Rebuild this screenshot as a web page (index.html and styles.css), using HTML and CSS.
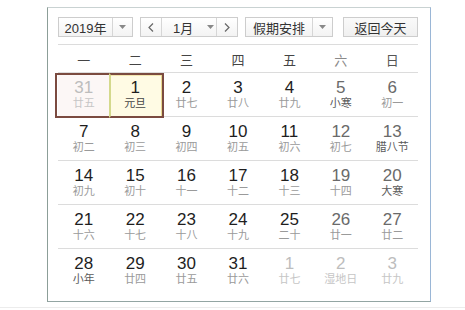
FILE: index.html
```html
<!DOCTYPE html>
<html lang="zh">
<head>
<meta charset="utf-8">
<link rel="stylesheet" href="styles.css">
</head>
<body>
<div class="frame">
  <div class="toolbar">
    <div class="ctl year"><span class="txt">2019年</span><span class="arr"><svg width="7" height="4" viewBox="0 0 7 4"><path d="M0 0h7L3.5 4z" fill="#888"/></svg></span></div>
    <div class="ctl month">
      <span class="nav"><svg width="6" height="9" viewBox="0 0 6 9"><path d="M5 0.5L1 4.5L5 8.5" fill="none" stroke="#666" stroke-width="1.2"/></svg></span>
      <span class="mtxt">1月<svg class="marr" width="7" height="4" viewBox="0 0 7 4"><path d="M0 0h7L3.5 4z" fill="#888"/></svg></span>
      <span class="nav next"><svg width="6" height="9" viewBox="0 0 6 9"><path d="M1 0.5L5 4.5L1 8.5" fill="none" stroke="#666" stroke-width="1.2"/></svg></span>
    </div>
    <div class="ctl holiday"><span class="txt">假期安排</span><span class="arr"><svg width="7" height="4" viewBox="0 0 7 4"><path d="M0 0h7L3.5 4z" fill="#888"/></svg></span></div>
    <div class="ctl today-btn">返回今天</div>
  </div>
  <div class="weekhead">
    <span>一</span><span>二</span><span>三</span><span>四</span><span>五</span><span class="sat">六</span><span class="sun">日</span>
  </div>
  <div class="row">
    <div class="cell other sel"><b>31</b><i>廿五</i></div>
    <div class="cell today"><b>1</b><i class="fest">元旦</i></div>
    <div class="cell"><b>2</b><i>廿七</i></div>
    <div class="cell"><b>3</b><i>廿八</i></div>
    <div class="cell"><b>4</b><i>廿九</i></div>
    <div class="cell we"><b>5</b><i class="fest">小寒</i></div>
    <div class="cell we"><b>6</b><i>初一</i></div>
  </div>
  <div class="row">
    <div class="cell"><b>7</b><i>初二</i></div>
    <div class="cell"><b>8</b><i>初三</i></div>
    <div class="cell"><b>9</b><i>初四</i></div>
    <div class="cell"><b>10</b><i>初五</i></div>
    <div class="cell"><b>11</b><i>初六</i></div>
    <div class="cell we"><b>12</b><i>初七</i></div>
    <div class="cell we"><b>13</b><i class="fest">腊八节</i></div>
  </div>
  <div class="row">
    <div class="cell"><b>14</b><i>初九</i></div>
    <div class="cell"><b>15</b><i>初十</i></div>
    <div class="cell"><b>16</b><i>十一</i></div>
    <div class="cell"><b>17</b><i>十二</i></div>
    <div class="cell"><b>18</b><i>十三</i></div>
    <div class="cell we"><b>19</b><i>十四</i></div>
    <div class="cell we"><b>20</b><i class="fest">大寒</i></div>
  </div>
  <div class="row">
    <div class="cell"><b>21</b><i>十六</i></div>
    <div class="cell"><b>22</b><i>十七</i></div>
    <div class="cell"><b>23</b><i>十八</i></div>
    <div class="cell"><b>24</b><i>十九</i></div>
    <div class="cell"><b>25</b><i>二十</i></div>
    <div class="cell we"><b>26</b><i>廿一</i></div>
    <div class="cell we"><b>27</b><i>廿二</i></div>
  </div>
  <div class="row last">
    <div class="cell"><b>28</b><i class="fest">小年</i></div>
    <div class="cell"><b>29</b><i>廿四</i></div>
    <div class="cell"><b>30</b><i>廿五</i></div>
    <div class="cell"><b>31</b><i>廿六</i></div>
    <div class="cell other"><b>1</b><i>廿七</i></div>
    <div class="cell other"><b>2</b><i>湿地日</i></div>
    <div class="cell other"><b>3</b><i>廿九</i></div>
  </div>
</div>
<div class="foot"></div>
</body>
</html>
```

FILE: styles.css
```css
* { box-sizing: border-box; }
html, body { margin: 0; padding: 0; background: #fff; }
body {
  width: 465px;
  height: 310px;
  overflow: hidden;
  font-family: "Liberation Sans", "Noto Sans CJK SC", sans-serif;
  color: #333;
}
.frame {
  margin: 7px 0 0 47px;
  width: 384px;
  border: 1px solid #c9d2d2;
  border-left-color: #8c9e98;
  border-right-color: #9ab6d6;
  border-bottom-color: #93a5a3;
  padding: 9px 12px 8px 10px;
}
.toolbar {
  display: flex;
  height: 28px;
  padding-bottom: 8px;
  border-bottom: 1px solid #dcdcdc;
}
.ctl {
  height: 20px;
  border: 1px solid #cdcdcd;
  background: linear-gradient(#ffffff, #f3f3f3);
  display: flex;
  align-items: center;
  font-size: 13px;
  color: #333;
}
.year { width: 75px; }
.year .txt { width: 53px; text-align: center; }
.arr {
  flex: 1;
  height: 100%;
  border-left: 1px solid #d6d6d6;
  display: flex;
  align-items: center;
  justify-content: center;
}
.month { width: 98px; margin-left: 7px; }
.nav {
  width: 21px;
  height: 100%;
  display: flex;
  align-items: center;
  justify-content: center;
  border-right: 1px solid #d6d6d6;
}
.nav.next { border-right: none; border-left: 1px solid #d6d6d6; }
.mtxt {
  flex: 1;
  display: flex;
  align-items: center;
  padding-left: 11px;
}
.marr { margin-left: 14px; }
.holiday { width: 88px; margin-left: 7px; }
.holiday .txt { width: 66px; text-align: center; }
.today-btn {
  width: 75px;
  margin-left: 10px;
  justify-content: center;
  background: linear-gradient(#fafafa, #f0f0f0);
}
.weekhead {
  display: grid;
  grid-template-columns: repeat(7, 1fr);
  height: 28px;
  border-bottom: 1px solid #dcdcdc;
  align-items: center;
  font-size: 13px;
  color: #444;
  text-align: center;
  padding-top: 1px;
}
.weekhead .sat { color: #8a8a8a; }
.weekhead .sun { color: #555; }
.row {
  display: grid;
  grid-template-columns: repeat(7, 1fr);
  height: 44px;
  border-bottom: 1px solid #dcdcdc;
}
.row.last { border-bottom: none; }
.cell {
  position: relative;
  display: flex;
  flex-direction: column;
  align-items: center;
  padding-top: 6px;
}
.cell b {
  font-weight: normal;
  font-size: 17px;
  line-height: 18px;
  color: #1e1e1e;
}
.cell i {
  font-style: normal;
  font-size: 11px;
  line-height: 13px;
  color: #9a9a9a;
}
.cell i.fest { color: #5a5a5a; }
.cell.we b { color: #6a6a6a; }
.cell.other b { color: #bdbdbd; }
.cell.other i { color: #c6c6c6; }
.cell.sel { background: #fcf7f6; }
.cell.sel::after {
  content: "";
  position: absolute;
  top: 0;
  bottom: -2px;
  left: -3px;
  right: 0;
  border: 2px solid #7b4b40;
  border-right: none;
}
.cell.today { background: #fffbe4; }
.cell.today::after {
  content: "";
  position: absolute;
  top: 0;
  bottom: -2px;
  left: 0;
  right: -3px;
  border: 2px solid #7b4b40;
  border-left: 2px solid #d4d98c;
  box-shadow: inset -1px 0 0 #e8d890, inset 0 1px 0 #f3e6b0;
}
.cell.today i.fest { color: #444; }
.foot {
  margin-top: 5px;
  height: 1px;
  background: #ececec;
}
```
